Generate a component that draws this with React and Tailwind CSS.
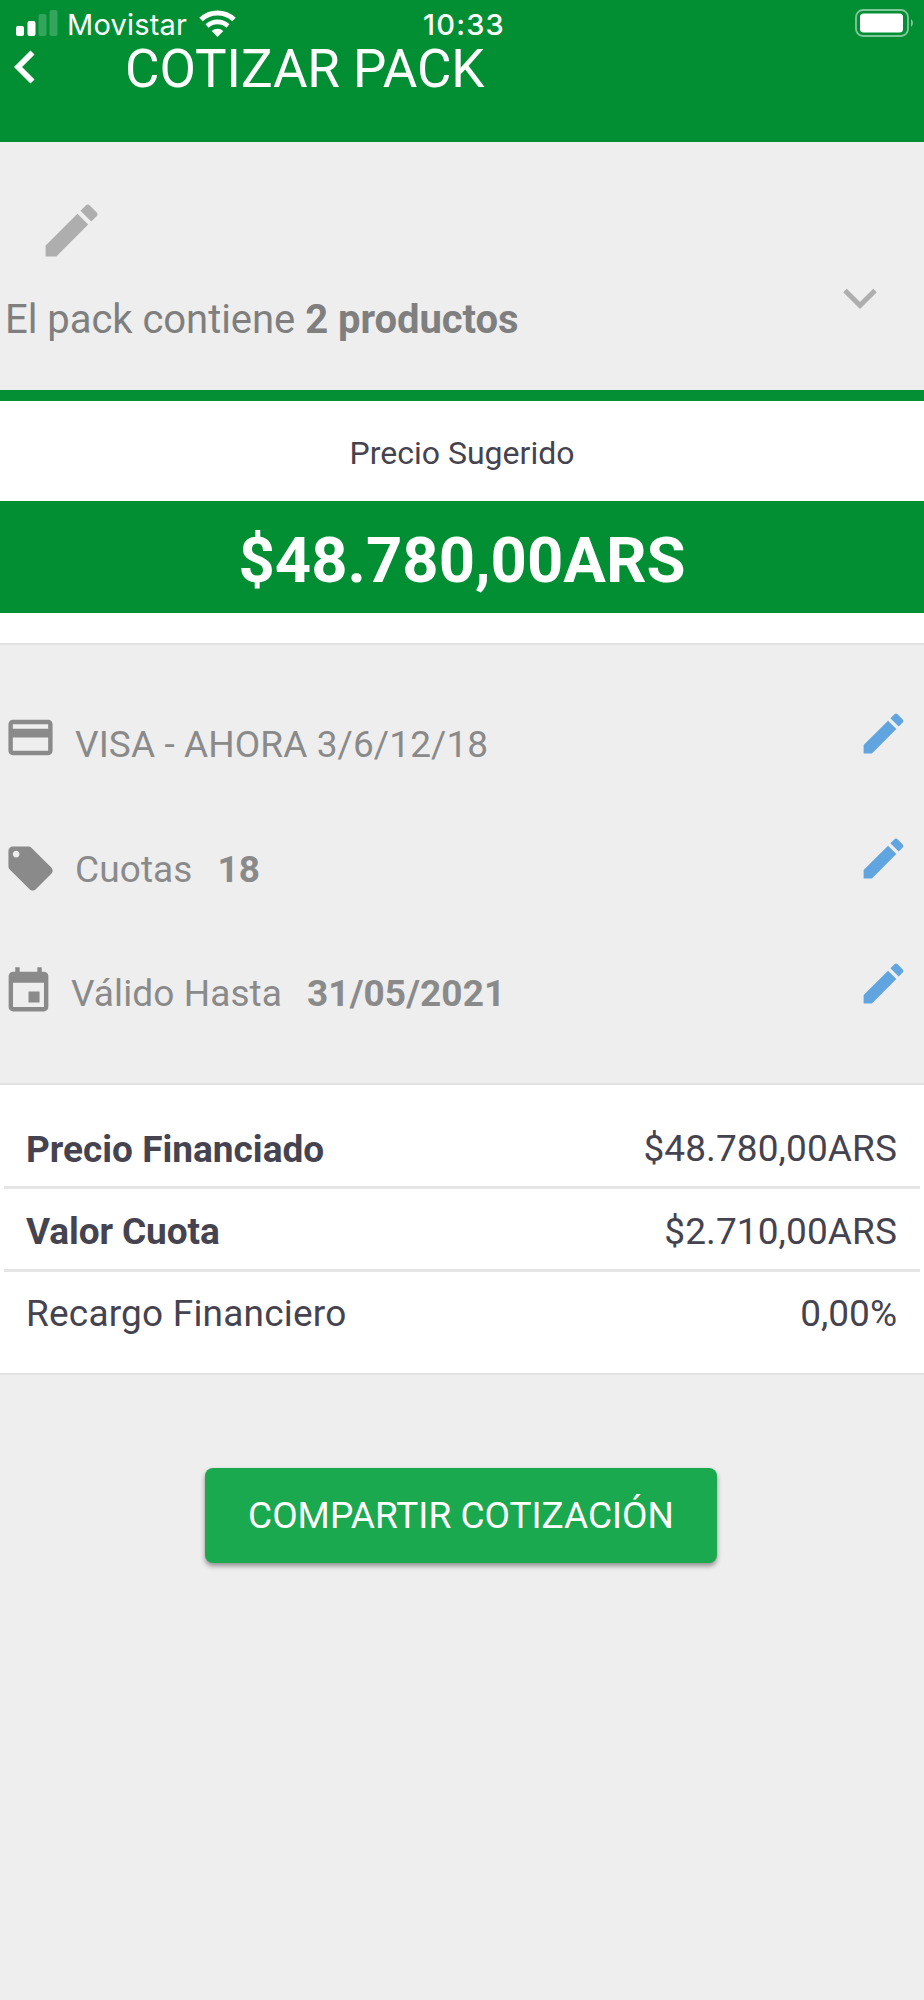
import { MdCreditCard, MdEdit, MdEvent, MdLocalOffer } from "react-icons/md";

function StatusBar(){
  return(
    <div className="flex items-center h-12 font-[Inter,sans-serif] text-[29px] leading-none">

      <svg className="ml-4 mb-0.5 shrink-0" width="42" height="26" viewBox="0 0 42 26" fill="white">
        <rect x="0" y="16" width="8" height="10" rx="2"/>
        <rect x="11.5" y="11" width="8" height="15" rx="2"/>
        <rect x="22.5" y="4" width="8" height="22" rx="2" opacity="0.2"/>
        <rect x="33.5" y="0" width="8" height="26" rx="2" opacity="0.2"/>
      </svg>

      <span className="ml-[9px] w-[122px] tracking-[0.2px] whitespace-nowrap">Movistar</span>

      <svg className="ml-[10px] mb-0.5 shrink-0" width="37" height="27" viewBox="0 0 37 27">
        <path d="M2 9.5 A24 24 0 0 1 35 9.5" fill="none" stroke="white" strokeWidth="5"/>
        <path d="M8 16 A15.5 15.5 0 0 1 29 16" fill="none" stroke="white" strokeWidth="4.6"/>
        <path d="M12.7 21 A8.6 8.6 0 0 1 24.3 21 L18.5 27 Z" fill="white"/>
      </svg>

      <span className="ml-[187px] font-medium tracking-[1.2px] whitespace-nowrap">10:33</span>

      <svg className="ml-auto mr-[9px] mb-0.5 shrink-0" width="60" height="28" viewBox="0 0 60 28">
        <rect x="1" y="1" width="52" height="26" rx="7" fill="none" stroke="white" strokeWidth="1.8" opacity="0.5"/>
        <rect x="5" y="4.5" width="43" height="19" rx="3.5" fill="white"/>
        <path d="M56 10 a5 5 0 0 1 0 8 z" fill="white" opacity="0.5"/>
      </svg>

    </div>
  );
}

function OptionRow({ icon, children }){
  return(
    <div className="flex items-center h-[125px] text-[37px] tracking-[0.1px] text-[#8a8a8a]">
      {icon}
      {children}
      <MdEdit className="ml-auto mr-[14px] mb-[22px] size-[53px] shrink-0 text-[#60a5df]"/>
    </div>
  );
}

export default function App(){

  return(

    <div className="w-[924px] h-[2000px] overflow-hidden bg-[#eeeeee] font-[Roboto,sans-serif] whitespace-nowrap">

      {/* HEADER */}

      <header className="h-[142px] bg-[#028f34] text-white">
        <StatusBar/>
        <div className="flex items-center h-10">
          <svg className="ml-[14px] mb-0.5 shrink-0" width="21" height="34" viewBox="0 0 21 34">
            <path d="M18.5 2.5 L4 17 L18.5 31.5" fill="none" stroke="white" strokeWidth="5.8"/>
          </svg>
          <h1 className="ml-[90px] pt-0.5 text-[53px] leading-[42px] tracking-[-0.1px]">COTIZAR PACK</h1>
        </div>
      </header>

      {/* PACK */}

      <section className="flex justify-between h-[259px] border-b-[11px] border-[#058f35]">
        <div className="pt-[54px]">
          <MdEdit className="ml-[37px] size-[69px] text-[#aeaeae]"/>
          <p className="mt-[31px] ml-[5px] text-[40px] leading-[48px] tracking-[-0.04px] text-[#7f7f7f]">
            El pack contiene <b>2 productos</b>
          </p>
        </div>
        <svg className="mt-[146px] mr-[47px] shrink-0" width="34" height="22" viewBox="0 0 34 22">
          <path d="M2 2.5 L17 17.5 L32 2.5" fill="none" stroke="#aeaeae" strokeWidth="5"/>
        </svg>
      </section>

      {/* SUGGESTED PRICE */}

      <section className="h-[244px] bg-white border-b-2 border-[#e2e2e2] text-center">
        <p className="h-[100px] pt-[3px] text-[32px] leading-[98px] text-[#45434f]">Precio Sugerido</p>
        <p className="h-28 pt-[3px] bg-[#028f34] text-[63.4px] leading-[112px] font-bold text-white">$48.780,00ARS</p>
      </section>

      {/* OPTIONS */}

      <section className="h-[440px] pt-[37px] border-b-2 border-[#e2e2e2]">
        <OptionRow icon={<MdCreditCard className="ml-1 mr-[18px] mb-[15px] size-[53px] text-[#8a8a8a]"/>}>
          <span>VISA - AHORA 3/6/12/18</span>
        </OptionRow>
        <OptionRow icon={<MdLocalOffer className="ml-1 mr-[18px] mb-[3px] size-[53px] text-[#8a8a8a]"/>}>
          <span>Cuotas</span>
          <b className="ml-[25px]">18</b>
        </OptionRow>
        <OptionRow icon={<MdEvent className="ml-[2px] mr-[16px] mb-[7px] size-[53px] text-[#8a8a8a]"/>}>
          <span className="pb-0.5">Válido Hasta</span>
          <b className="ml-[25px] pb-0.5">31/05/2021</b>
        </OptionRow>
      </section>

      {/* TOTALS */}

      <section className="h-[290px] pt-[26px] px-1 bg-white border-b-2 border-[#e2e2e2] text-[37px] text-[#45434f]">
        <div className="flex items-center justify-between h-[78px] pl-[22px] pr-[23px] pt-[3px] border-b-3 border-[#e4e4e4]">
          <b>Precio Financiado</b>
          <span className="tracking-[0.1px] pb-0.5">$48.780,00ARS</span>
        </div>
        <div className="flex items-center justify-between h-[83px] pl-[22px] pr-[23px] pt-[5px] border-b-3 border-[#e4e4e4]">
          <b className="tracking-[-0.1px]">Valor Cuota</b>
          <span className="tracking-[0.1px]">$2.710,00ARS</span>
        </div>
        <div className="flex items-center justify-between h-[83px] pl-[22px] pr-[23px]">
          <span className="tracking-[0.2px]">Recargo Financiero</span>
          <span>0,00%</span>
        </div>
      </section>

      <button className="block mt-[93px] ml-[205px] w-[512px] h-[95px] rounded-lg bg-[#1ba94f] text-[37px] text-white shadow-[0_3px_5px_rgba(0,0,0,0.4)]">
        COMPARTIR COTIZACIÓN
      </button>

    </div>

  );

}
